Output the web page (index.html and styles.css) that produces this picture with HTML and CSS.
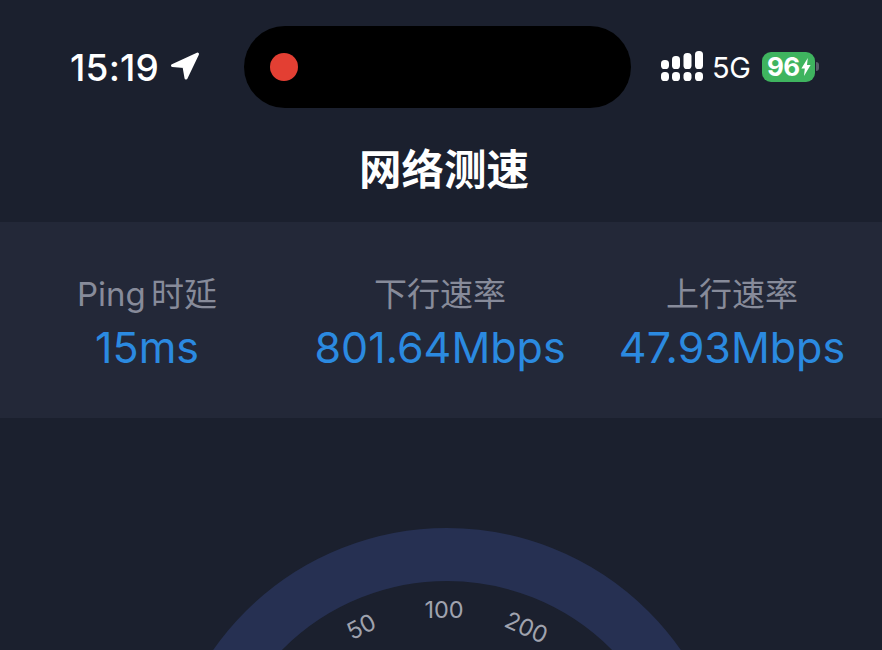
FILE: index.html
```html
<!DOCTYPE html>
<html lang="zh-CN">
<head>
<meta charset="utf-8">
<title>网络测速</title>
<link rel="stylesheet" href="styles.css">
</head>
<body>
<main class="phone">
  <header class="status">
    <div class="status-left">
      <span class="time">15:19</span>
      <svg class="loc" viewBox="0 0 30 28" aria-hidden="true"><path d="M27.5 2 2.5 13.5 14 14.5 16 26Z"/></svg>
    </div>
    <div class="island"><span class="rec"></span></div>
    <div class="status-right">
      <svg class="signal" viewBox="0 0 42 31" aria-hidden="true">
        <rect x="0" y="10" width="8" height="9" rx="3.6"/><rect x="0" y="22" width="8" height="9" rx="3.6"/>
        <rect x="11" y="6" width="8" height="13" rx="3.6"/><rect x="11" y="22" width="8" height="9" rx="3.6"/>
        <rect x="22.5" y="3" width="8" height="16" rx="3.6"/><rect x="22.5" y="22" width="8" height="9" rx="3.6"/>
        <rect x="34" y="1" width="8" height="18" rx="3.6"/><rect x="34" y="22" width="8" height="9" rx="3.6"/>
      </svg>
      <span class="net">5G</span>
      <div class="battery"><span class="pct">96</span><svg class="bolt" viewBox="0 0 10 18" aria-hidden="true"><path d="M6.8 0 .4 10.4h3.4L3 18l6.6-11H6Z"/></svg></div>
      <span class="nub"></span>
    </div>
  </header>
  <h1 class="title">网络测速</h1>
  <section class="stats">
    <div class="stat"><div class="label ping">Ping 时延</div><div class="value">15ms</div></div>
    <div class="stat"><div class="label">下行速率</div><div class="value">801.64Mbps</div></div>
    <div class="stat"><div class="label">上行速率</div><div class="value">47.93Mbps</div></div>
  </section>
  <section class="gauge-area">
    <svg class="gauge" viewBox="0 0 882 122" aria-label="速度表">
      <circle class="track" cx="447" cy="285" r="258.5"/>
      <text class="tick" transform="translate(365 106) rotate(-27)">50</text>
      <text class="tick" transform="translate(444 90)">100</text>
      <text class="tick" transform="translate(523 107) rotate(24)">200</text>
    </svg>
  </section>
</main>
</body>
</html>
```
FILE: styles.css
```css
* { box-sizing: border-box; }
html, body { margin: 0; height: 100%; }
body { background: #1b202e; overflow: hidden; font-family: Inter, "Noto Sans CJK SC", sans-serif; }
.phone { width: 882px; height: 650px; display: flex; flex-direction: column; overflow: hidden; }
.status { height: 108px; padding-top: 26px; display: flex; align-items: flex-start; }
.status-left { width: 244px; height: 82px; padding-left: 70px; display: flex; align-items: center; gap: 11px; color: #fff; }
.time { font-size: 37px; font-weight: 500; letter-spacing: 0.2px; }
.loc { width: 30px; height: 28px; fill: #fff; stroke: #fff; stroke-width: 3; stroke-linejoin: round; margin-top: -2px; }
.island { width: 387px; height: 82px; background: #000; border-radius: 41px; display: flex; align-items: center; padding-left: 26px; }
.rec { width: 28px; height: 28px; border-radius: 50%; background: #e33f33; }
.status-right { height: 82px; padding-left: 30px; display: flex; align-items: center; color: #fff; }
.signal { width: 42px; height: 31px; fill: #fff; margin-top: -3px; }
.net { font-size: 29px; margin-left: 9px; letter-spacing: -0.5px; }
.battery { width: 53px; height: 30px; margin-left: 12px; margin-top: -1px; border-radius: 9px; background: #3fb45f; display: flex; align-items: center; justify-content: center; gap: 1px; color: #fff; }
.pct { font-size: 26px; font-weight: 700; letter-spacing: -0.5px; }
.bolt { width: 10px; height: 18px; fill: #fff; }
.nub { width: 3px; height: 9px; margin-left: 1px; margin-top: -1px; border-radius: 0 3px 3px 0; background: #5a5f6b; }
.title { margin: 0; height: 114px; padding-top: 32px; padding-left: 6px; text-align: center; color: #fff; font-size: 42.5px; font-weight: 700; line-height: 54px; font-family: "Noto Sans CJK SC", sans-serif; }
.stats { height: 196px; background: #232838; display: grid; grid-template-columns: 294px 292px 292px; padding-top: 50px; text-align: center; }
.label { font-size: 33px; line-height: 44px; color: #878b9a; }
.ping { word-spacing: -4px; }
.value { font-size: 43px; line-height: 62px; color: #2b8ae0; }
.gauge-area { flex: 1; padding-top: 110px; }
.gauge { display: block; width: 882px; height: 122px; }
.track { fill: none; stroke: #263052; stroke-width: 53; }
.tick { fill: #a0a3ae; font-size: 23.5px; text-anchor: middle; }
```
